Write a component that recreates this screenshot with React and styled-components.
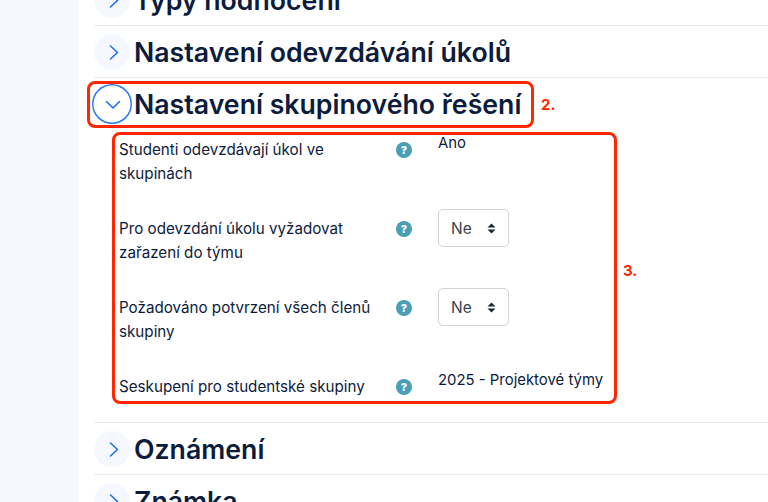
import styled, { createGlobalStyle } from 'styled-components';

const GlobalStyle = createGlobalStyle`
  html, body {
    margin: 0;
    height: 100%;
    background: #fff;
    overflow: hidden;
  }
  body {
    font-family: Inter, "Liberation Sans", sans-serif;
    color: #0d1c3c;
  }
`;

function Chevron({ open }) {
  return (
    <ChevronIcon width="16" height="16" viewBox="0 0 16 16" fill="none">
      <path
        d={open ? 'M2.5 5.5 9 12 15.5 5.5' : 'M6.5 2 13.5 8.5 6.5 15'}
        stroke="#1f6ff0"
        strokeWidth="1.6"
        strokeLinecap="round"
        strokeLinejoin="round"
      />
    </ChevronIcon>
  );
}

function SectionHeader({ title, open }) {
  return (
    <SectionRow $open={open}>
      <Toggle $open={open}>
        <Chevron open={open} />
      </Toggle>
      <SectionTitle>{title}</SectionTitle>
    </SectionRow>
  );
}

function Setting({ label, children, valueOffset }) {
  return (
    <SettingRow>
      <SettingLabel>{label}</SettingLabel>
      <HelpIcon>?</HelpIcon>
      <SettingValue $offset={valueOffset}>{children}</SettingValue>
    </SettingRow>
  );
}

function SelectBox({ value }) {
  return (
    <Select>
      <SelectText>{value}</SelectText>
      <svg width="9" height="11" viewBox="0 0 9 11">
        <path d="M4.5 0.5 8.5 4.4H0.5ZM4.5 10.5 0.5 6.6H8.5Z" fill="#1c2636" />
      </svg>
    </Select>
  );
}

function App() {
  return (
    <Page>
      <GlobalStyle />
      <Sidebar />
      <Main>
        <SectionHeader title="Typy hodnocení" />
        <SectionHeader title="Nastavení odevzdávání úkolů" />
        <SectionHeader title="Nastavení skupinového řešení" open />
        <SettingsList>
          <Setting label="Studenti odevzdávají úkol ve skupinách" valueOffset="-5px">Ano</Setting>
          <Setting label="Pro odevzdání úkolu vyžadovat zařazení do týmu" valueOffset="-6px">
            <SelectBox value="Ne" />
          </Setting>
          <Setting label="Požadováno potvrzení všech členů skupiny" valueOffset="-6px">
            <SelectBox value="Ne" />
          </Setting>
          <Setting label="Seskupení pro studentské skupiny" valueOffset="-5px">2025 - Projektové týmy</Setting>
        </SettingsList>
        <SectionHeader title="Oznámení" />
        <SectionHeader title="Známka" />
      </Main>
      <HeaderMark />
      <MarkNumber $left="541px" $top="96px">2.</MarkNumber>
      <SettingsMark />
      <MarkNumber $left="623px" $top="262px">3.</MarkNumber>
    </Page>
  );
}

const Page = styled.div`
  position: relative;
  display: flex;
  width: 768px;
  height: 502px;
  overflow: hidden;
`;

const Sidebar = styled.aside`
  flex: 0 0 79px;
  background: #f5f9ff;
`;

const Main = styled.main`
  flex: 1;
  margin-top: -26px;
  padding-left: 15px;
`;

const SectionRow = styled.div`
  display: flex;
  align-items: center;
  height: 51px;
  border-bottom: ${(props) => (props.$open ? 'none' : '1px solid #e9ebee')};
`;

const Toggle = styled.div`
  display: flex;
  align-items: center;
  justify-content: center;
  flex: 0 0 36px;
  width: 36px;
  height: 36px;
  margin-right: 4px;
  border-radius: 50%;
  background: ${(props) => (props.$open ? '#fff' : '#f5f9ff')};
  box-shadow: ${(props) => (props.$open ? '0 0 0 0.5px #fff, 0 0 0 2px #2f7bf0' : 'none')};
`;

const ChevronIcon = styled.svg`
  overflow: visible;
`;

const SectionTitle = styled.h3`
  margin: 0;
  font-size: 26.7px;
  font-weight: 600;
  line-height: 32px;
  white-space: nowrap;
`;

const SettingsList = styled.div`
  box-sizing: border-box;
  height: 294px;
  padding: 7px 0 0 25px;
  border-bottom: 1px solid #e9ebee;
`;

const SettingRow = styled.div`
  display: flex;
  align-items: flex-start;
  height: 79px;
`;

const SettingLabel = styled.div`
  flex: 0 0 277px;
  box-sizing: border-box;
  padding: 2px 20px 0 0;
  font-size: 15.2px;
  line-height: 24px;
`;

const HelpIcon = styled.span`
  display: flex;
  align-items: center;
  justify-content: center;
  flex: 0 0 16px;
  height: 16px;
  margin: 6px 26px 0 0;
  border-radius: 50%;
  background: #4a9eb6;
  color: #fff;
  font-size: 11px;
  font-weight: 800;
`;

const SettingValue = styled.div`
  margin-top: ${(props) => props.$offset};
  font-size: 14.9px;
  line-height: 24px;
  white-space: nowrap;
`;

const Select = styled.div`
  display: flex;
  align-items: center;
  justify-content: space-between;
  box-sizing: border-box;
  width: 71px;
  height: 38px;
  padding: 0 12px;
  border: 1px solid #ced4da;
  border-radius: 5px;
  background: #fff;
  color: #3a4350;
  font-size: 15.5px;
`;

const SelectText = styled.span`
  padding-top: 1px;
`;

const HeaderMark = styled.div`
  position: absolute;
  left: 87px;
  top: 81px;
  width: 447px;
  height: 47px;
  box-sizing: border-box;
  border: 3px solid #ff2600;
  border-radius: 8px;
`;

const SettingsMark = styled.div`
  position: absolute;
  left: 112px;
  top: 132px;
  width: 505px;
  height: 272px;
  box-sizing: border-box;
  border: 3px solid #ff2600;
  border-radius: 8px;
`;

const MarkNumber = styled.span`
  position: absolute;
  left: ${(props) => props.$left};
  top: ${(props) => props.$top};
  color: #ff2600;
  font-size: 15px;
  font-weight: 700;
  line-height: 18px;
`;

export default App;
